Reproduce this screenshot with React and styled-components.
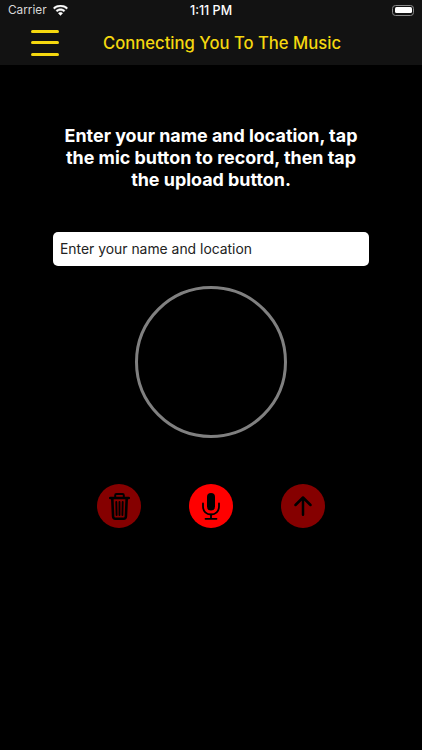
import React from 'react';
import styled, { createGlobalStyle } from 'styled-components';

const GlobalStyle = createGlobalStyle`
  html, body {
    margin: 0;
    padding: 0;
    background: #000;
  }
  body {
    font-family: Inter, "Liberation Sans", sans-serif;
  }
`;

const TrashIcon = () => (
  <svg width="21" height="27" viewBox="0 0 21 27" fill="none" stroke="#000" strokeLinecap="round">
    <path d="M6.200 4V2.200c0-.7.500-1.200 1.200-1.200h6.200c.7 0 1.200.500 1.200 1.200V4" strokeWidth="2" />
    <path d="M1.200 5h18.600" strokeWidth="2.600" />
    <path d="M3.300 6l.8 17.500c.1 1.300.9 2.200 2.200 2.200h8.400c1.300 0 2.100-.9 2.200-2.200L17.700 6" strokeWidth="2.600" />
    <path d="M7.300 9l.3 13M10.500 9v13M13.700 9l-.3 13" strokeWidth="1.900" />
  </svg>
);

const MicIcon = () => (
  <svg width="18" height="27" viewBox="0 0 18 27" fill="none" stroke="#000" strokeLinecap="round">
    <rect x="5" y="0" width="8" height="17.500" rx="4" fill="#000" stroke="none" />
    <path d="M1 10.500v3c0 4.800 3.500 8 8 8s8-3.200 8-8v-3" strokeWidth="1.800" />
    <path d="M9 21.500v4M3.500 25.800h11" strokeWidth="1.800" />
  </svg>
);

const ArrowIcon = () => (
  <svg width="18" height="20" viewBox="0 0 18 20" fill="none" stroke="#000" strokeWidth="2.500" strokeLinecap="round" strokeLinejoin="round">
    <path d="M9 18.700V1.500M1.500 9l7.500-7.500L16.500 9" />
  </svg>
);

const WifiIcon = () => (
  <svg width="15" height="11" viewBox="0 0 16 12" fill="#fff" stroke="#fff" strokeWidth="0.500">
    <path d="M8 0c3 0 5.700 1.100 7.800 3.100l-1.300 1.400C12.800 2.800 10.500 1.900 8 1.900S3.200 2.800 1.500 4.500L.2 3.100C2.300 1.100 5 0 8 0z" />
    <path d="M8 4.100c1.900 0 3.600.7 4.900 1.900l-1.300 1.400C10.600 6.500 9.400 6 8 6s-2.600.5-3.600 1.400L3.100 6C4.400 4.800 6.100 4.100 8 4.100z" />
    <path d="M8 8c.9 0 1.700.3 2.300.9L8 11.400 5.700 8.900C6.300 8.300 7.100 8 8 8z" />
  </svg>
);

export default function App() {
  return (
    <>
      <GlobalStyle />
      <Screen>
        <Header>
          <StatusBar>
            <StatusLeft>
              <span>Carrier</span>
              <WifiIcon />
            </StatusLeft>
            <Clock>1:11 PM</Clock>
            <Battery>
              <BatteryFill />
            </Battery>
          </StatusBar>
          <NavBar>
            <Burger>
              <BurgerLine />
              <BurgerLine />
              <BurgerLine />
            </Burger>
            <Title>Connecting You To The Music</Title>
          </NavBar>
        </Header>
        <Content>
          <Intro>Enter your name and location, tap the mic button to record, then tap the upload button.</Intro>
          <NameField>Enter your name and location</NameField>
          <Ring />
          <Actions>
            <RoundButton $dim>
              <TrashIcon />
            </RoundButton>
            <RoundButton>
              <MicIcon />
            </RoundButton>
            <RoundButton $dim>
              <ArrowIcon />
            </RoundButton>
          </Actions>
        </Content>
      </Screen>
    </>
  );
}

const Screen = styled.div`
  width: 422px;
  height: 750px;
  background: #000;
  overflow: hidden;
`;

const Header = styled.div`
  height: 65px;
  background: #121212;
`;

const StatusBar = styled.div`
  height: 20px;
  display: grid;
  grid-template-columns: 1fr auto 1fr;
  align-items: center;
  padding: 0 8px;
  color: #fff;
  font-size: 12.500px;
`;

const StatusLeft = styled.div`
  display: flex;
  align-items: center;
  gap: 6px;
  color: #d8d8d8;
  font-size: 11.800px;
`;

const Clock = styled.div`
  font-weight: 500;
`;

const Battery = styled.div`
  justify-self: end;
  width: 22px;
  height: 11px;
  box-sizing: border-box;
  padding: 1.500px;
  border: 1px solid #8a8a8a;
  border-radius: 3.500px;
`;

const BatteryFill = styled.div`
  height: 100%;
  background: #fff;
  border-radius: 1.500px;
`;

const NavBar = styled.div`
  height: 45px;
  display: flex;
  align-items: center;
  padding-left: 31px;
  gap: 44px;
`;

const Burger = styled.div`
  width: 28px;
  height: 26px;
  display: flex;
  flex-direction: column;
  justify-content: space-between;
`;

const BurgerLine = styled.div`
  height: 3px;
  background: #f5d80f;
  border-radius: 1.500px;
`;

const Title = styled.div`
  color: #f5d80f;
  font-size: 16.650px;
  font-weight: 500;
  white-space: nowrap;
`;

const Content = styled.div`
  display: flex;
  flex-direction: column;
  align-items: center;
`;

const Intro = styled.div`
  width: 320px;
  margin-top: 60px;
  color: #fff;
  font-size: 17.900px;
  font-weight: 700;
  line-height: 22px;
  text-align: center;
`;

const NameField = styled.div`
  width: 316px;
  height: 34px;
  margin-top: 41px;
  padding-left: 7px;
  box-sizing: border-box;
  display: flex;
  align-items: center;
  background: #fff;
  border-radius: 5px;
  color: #222;
  font-size: 13.900px;
`;

const Ring = styled.div`
  width: 152px;
  height: 152px;
  box-sizing: border-box;
  margin-top: 20px;
  border: 3px solid #808080;
  border-radius: 50%;
`;

const Actions = styled.div`
  width: 228px;
  margin-top: 46px;
  display: flex;
  justify-content: space-between;
`;

const RoundButton = styled.div`
  width: 44px;
  height: 44px;
  border-radius: 50%;
  display: flex;
  align-items: center;
  justify-content: center;
  background: ${props => (props.$dim ? '#850000' : '#ff0000')};
`;
